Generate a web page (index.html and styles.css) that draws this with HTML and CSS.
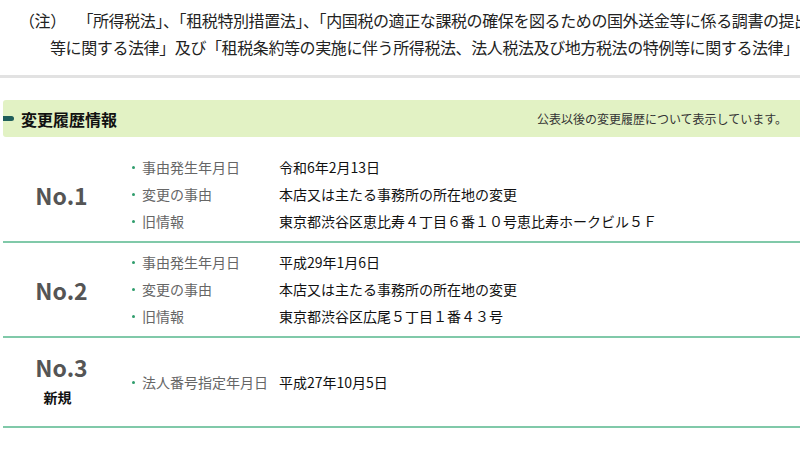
FILE: index.html
```html
<!DOCTYPE html>
<html lang="ja">
<head>
<meta charset="utf-8">
<link rel="stylesheet" href="styles.css">
</head>
<body>
<div class="page">
  <p class="note"><span class="note-mark">（注）</span>　「所得税法」、「租税特別措置法」、「内国税の適正な課税の確保を図るための国外送金等に係る調書の提出<br>等に関する法律」及び「租税条約等の実施に伴う所得税法、法人税法及び地方税法の特例等に関する法律」</p>
  <div class="rule"></div>
  <section class="history">
    <div class="history-head">
      <h2 class="history-title"><span class="marker"></span>変更履歴情報</h2>
      <p class="history-desc">公表以後の変更履歴について表示しています。</p>
    </div>
    <div class="rows">
      <div class="row">
        <div class="row-no"><div class="no">No.1</div></div>
        <ul class="items">
          <li class="item"><span class="label">事由発生年月日</span><span class="value">令和6年2月13日</span></li>
          <li class="item"><span class="label">変更の事由</span><span class="value">本店又は主たる事務所の所在地の変更</span></li>
          <li class="item"><span class="label">旧情報</span><span class="value">東京都渋谷区恵比寿４丁目６番１０号恵比寿ホークビル５Ｆ</span></li>
        </ul>
      </div>
      <div class="row">
        <div class="row-no"><div class="no">No.2</div></div>
        <ul class="items">
          <li class="item"><span class="label">事由発生年月日</span><span class="value">平成29年1月6日</span></li>
          <li class="item"><span class="label">変更の事由</span><span class="value">本店又は主たる事務所の所在地の変更</span></li>
          <li class="item"><span class="label">旧情報</span><span class="value">東京都渋谷区広尾５丁目１番４３号</span></li>
        </ul>
      </div>
      <div class="row">
        <div class="row-no"><div class="no">No.3</div><div class="kind">新規</div></div>
        <ul class="items">
          <li class="item"><span class="label">法人番号指定年月日</span><span class="value">平成27年10月5日</span></li>
        </ul>
      </div>
    </div>
  </section>
</div>
</body>
</html>
```

FILE: styles.css
```css
html, body {
  margin: 0;
  padding: 0;
  overflow: hidden;
  background: #fff;
}
body {
  font-family: "Noto Sans CJK JP", "Noto Sans", sans-serif;
  color: #111;
}
.page {
  width: 800px;
  overflow: hidden;
}
.note {
  margin: 0;
  padding: 7px 0 0 50px;
  text-indent: -31px;
  font-size: 16px;
  line-height: 27px;
  letter-spacing: -0.4px;
  white-space: nowrap;
  color: #222;
}
.note-mark {
  margin-right: 12px;
}
.rule {
  height: 3px;
  background: #e2e2e2;
  margin-top: 14px;
}
.history {
  margin: 22px 0 0 3px;
}
.history-head {
  display: flex;
  align-items: center;
  justify-content: space-between;
  height: 37px;
  background: #e2f2c4;
  border-radius: 3px 0 0 3px;
}
.history-title {
  display: flex;
  align-items: center;
  margin: 0;
  font-size: 16px;
  font-weight: 700;
  color: #111;
}
.marker {
  width: 11px;
  height: 5px;
  background: #1f5e5a;
  border-radius: 0 3px 3px 0;
  margin-right: 7px;
}
.history-desc {
  margin: 0 13px 0 0;
  font-size: 12px;
  color: #333;
}
.rows {
  padding-top: 11px;
}
.row {
  display: flex;
  align-items: center;
  border-bottom: 2px solid #80c9a9;
}
.row-no {
  width: 115px;
  padding: 14px 0;
  display: flex;
  flex-direction: column;
  align-items: center;
}
.no {
  font-size: 23px;
  font-weight: 600;
  color: #555;
  line-height: 30px;
  padding-left: 2px;
}
.kind {
  font-size: 14px;
  font-weight: 700;
  line-height: 30px;
  color: #111;
  margin-right: 6px;
}
.items {
  list-style: none;
  margin: 0;
  padding: 6px 0;
}
.item {
  display: flex;
  align-items: center;
  font-size: 14px;
  line-height: 27px;
}
.item::before {
  content: "";
  width: 3px;
  height: 3px;
  border-radius: 50%;
  background: #2f9d6c;
  margin: 0 7px 0 14px;
}
.label {
  width: 137px;
  color: #666;
}
.value {
  color: #111;
  white-space: nowrap;
}
```
